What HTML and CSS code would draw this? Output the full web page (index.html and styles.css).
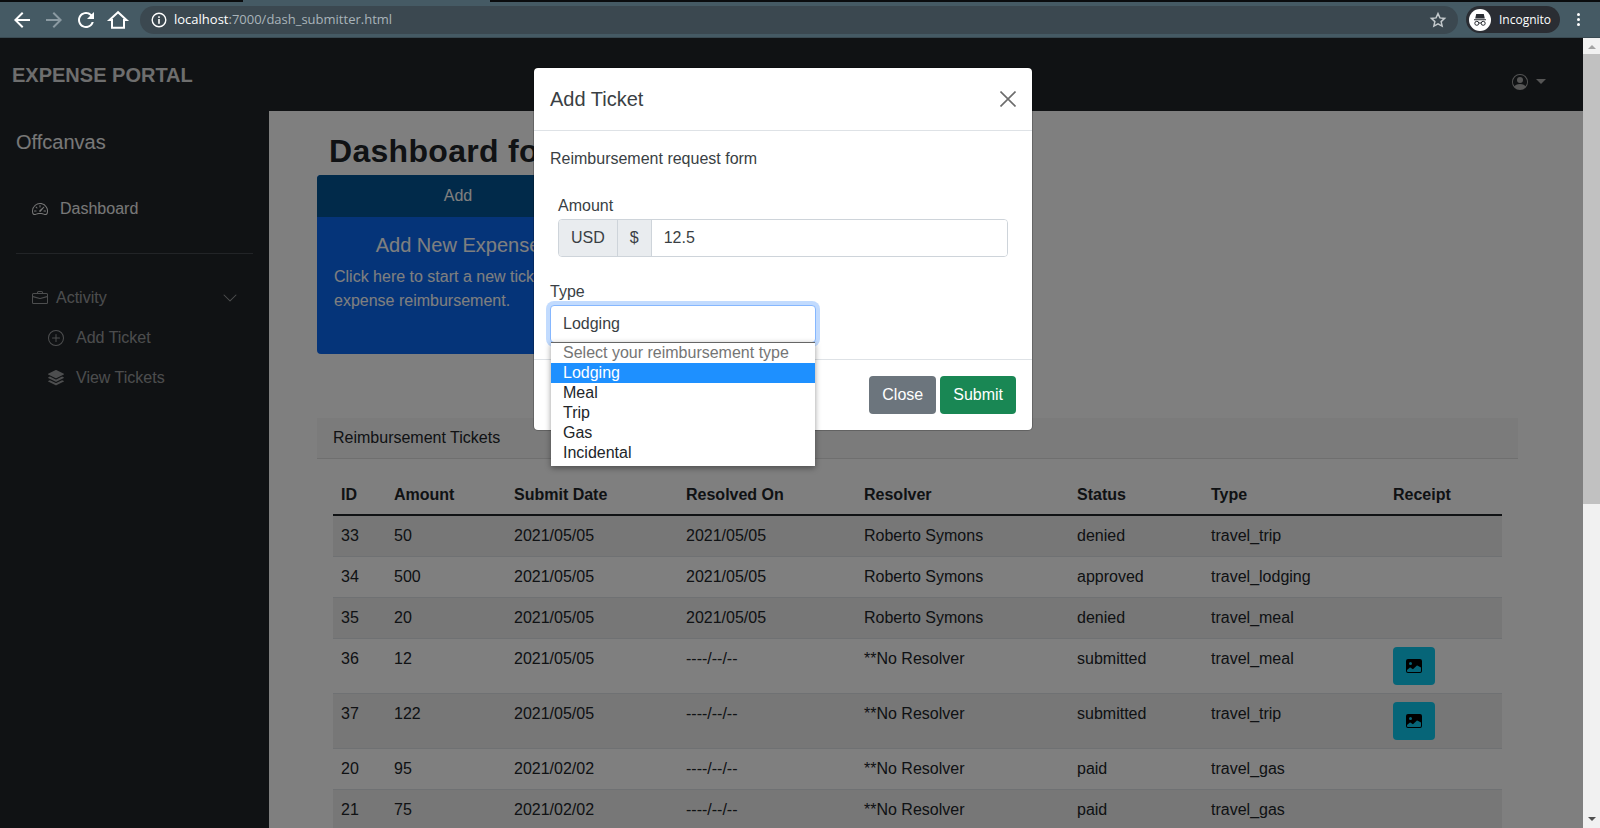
FILE: index.html
```html
<!DOCTYPE html>
<html lang="en">
<head>
    <meta charset="UTF-8">
    <meta name="viewport" content="width=device-width, initial-scale=1.0">
    <title>Expense Portal</title>
    <link rel="stylesheet" href="styles.css">
</head>
<body>

    <!-- browser chrome -->
    <div class="tabstrip"><div class="active-tab"></div></div>
    <div class="toolbar">
        <svg class="tool" viewBox="0 0 24 24"><path d="M20 11H7.83l5.59-5.59L12 4l-8 8 8 8 1.41-1.41L7.83 13H20v-2z"/></svg>
        <svg class="tool tool-off" viewBox="0 0 24 24"><path d="M12 4l-1.41 1.41L16.17 11H4v2h12.17l-5.58 5.59L12 20l8-8z"/></svg>
        <svg class="tool" viewBox="0 0 24 24"><path d="M17.65 6.35A7.958 7.958 0 0 0 12 4c-4.42 0-7.99 3.58-7.99 8s3.57 8 7.99 8c3.73 0 6.84-2.55 7.73-6h-2.08A5.99 5.99 0 0 1 12 18c-3.31 0-6-2.69-6-6s2.69-6 6-6c1.66 0 3.14.69 4.22 1.78L13 11h7V4l-2.35 2.35z"/></svg>
        <svg class="tool" viewBox="0 0 24 24"><path class="home-line" d="M12 4.2 3.5 12H6v7.8h12V12h2.500z"/></svg>
        <div class="address">
            <svg class="info" viewBox="0 0 16 16"><circle class="info-ring" cx="8" cy="8" r="6.8"/><rect x="7.200" y="7" width="1.600" height="4.800"/><rect x="7.200" y="4.300" width="1.600" height="1.600"/></svg>
            <span class="url"><b>localhost</b>:7000/dash_submitter.html</span>
            <svg class="star" viewBox="0 0 24 24"><path d="M12 3.500l2.600 5.700 6.200.7-4.600 4.200 1.300 6.100L12 17.100l-5.500 3.100 1.300-6.100-4.600-4.200 6.200-.7z"/></svg>
        </div>
        <div class="profile">
            <span class="profile-pic">
                <svg viewBox="0 0 22 22">
                    <path d="M5 10.200h12v1H5zM7.200 5h7.600l1 4.400H6.200z"/>
                    <circle class="glass" cx="7.800" cy="14.300" r="2"/>
                    <circle class="glass" cx="14.200" cy="14.300" r="2"/>
                    <path class="glass" d="M9.800 14h2.400"/>
                </svg>
            </span>
            <span>Incognito</span>
        </div>
        <div class="dots"><i></i><i></i><i></i></div>
    </div>

    <div class="viewport">
        <div class="page">
            <header class="navbar">
                <span class="brand">EXPENSE PORTAL</span>
                <span class="user-menu">
                    <svg class="icon" viewBox="0 0 16 16"><path d="M11 6a3 3 0 1 1-6 0 3 3 0 0 1 6 0z"/><path fill-rule="evenodd" d="M0 8a8 8 0 1 1 16 0A8 8 0 0 1 0 8zm8-7a7 7 0 0 0-5.468 11.370C3.242 11.226 4.805 10 8 10s4.757 1.225 5.468 2.370A7 7 0 0 0 8 1z"/></svg>
                    <span class="caret"></span>
                </span>
            </header>

            <div class="layout">
                <aside class="sidebar">
                    <div class="side-title">Offcanvas</div>
                    <a class="side-link side-main">
                        <svg class="icon" viewBox="0 0 16 16"><path d="M8 4a.5.5 0 0 1 .5.5V6a.5.5 0 0 1-1 0V4.500A.5.5 0 0 1 8 4zM3.732 5.732a.5.5 0 0 1 .707 0l.915.914a.5.5 0 1 1-.708.708l-.914-.915a.5.5 0 0 1 0-.707zM2 10a.5.5 0 0 1 .5-.5h1.586a.5.5 0 0 1 0 1H2.500A.5.5 0 0 1 2 10zm9.500 0a.5.5 0 0 1 .5-.5h1.500a.5.5 0 0 1 0 1H12a.5.5 0 0 1-.5-.5zm.754-4.246a.389.389 0 0 0-.527-.02L7.547 9.310a.91.91 0 1 0 1.302 1.258l3.434-4.297a.389.389 0 0 0-.029-.518z"/><path fill-rule="evenodd" d="M0 10a8 8 0 1 1 15.547 2.661c-.442 1.253-1.845 1.602-2.932 1.250C11.309 13.488 9.475 13 8 13c-1.474 0-3.310.488-4.615.911-1.087.352-2.490.003-2.932-1.250A7.988 7.988 0 0 1 0 10zm8-7a7 7 0 0 0-6.603 9.329c.203.575.923.876 1.680.630C4.397 12.533 6.358 12 8 12s3.604.532 4.923.960c.757.245 1.477-.056 1.680-.631A7 7 0 0 0 8 3z"/></svg>
                        Dashboard
                    </a>
                    <hr class="side-rule">
                    <a class="side-link side-group">
                        <svg class="icon" viewBox="0 0 16 16"><path d="M6.500 1A1.500 1.500 0 0 0 5 2.500V3H1.500A1.500 1.500 0 0 0 0 4.500v8A1.500 1.500 0 0 0 1.500 14h13a1.500 1.500 0 0 0 1.500-1.500v-8A1.500 1.500 0 0 0 14.500 3H11v-.5A1.500 1.500 0 0 0 9.500 1h-3zm0 1h3a.5.5 0 0 1 .5.5V3H6v-.5a.5.5 0 0 1 .5-.5zm1.886 6.914L15 7.151V12.500a.5.5 0 0 1-.5.5h-13a.5.5 0 0 1-.5-.5V7.150l6.614 1.764a1.500 1.500 0 0 0 .772 0zM1.500 4h13a.5.5 0 0 1 .5.5v1.616L8.129 7.948a.5.5 0 0 1-.258 0L1 6.116V4.500a.5.5 0 0 1 .5-.5z"/></svg>
                        Activity
                        <svg class="icon chevron" viewBox="0 0 16 16"><path d="M1.646 4.646a.5.5 0 0 1 .708 0L8 10.293l5.646-5.647a.5.5 0 0 1 .708.708l-6 6a.5.5 0 0 1-.708 0l-6-6a.5.5 0 0 1 0-.708z"/></svg>
                    </a>
                    <a class="side-link side-sub">
                        <svg class="icon" viewBox="0 0 16 16"><path d="M8 15A7 7 0 1 1 8 1a7 7 0 0 1 0 14zm0 1A8 8 0 1 0 8 0a8 8 0 0 0 0 16z"/><path d="M8 4a.5.5 0 0 1 .5.5v3h3a.5.5 0 0 1 0 1h-3v3a.5.5 0 0 1-1 0v-3h-3a.5.5 0 0 1 0-1h3v-3A.5.5 0 0 1 8 4z"/></svg>
                        Add Ticket
                    </a>
                    <a class="side-link side-sub">
                        <svg class="icon" viewBox="0 0 16 16"><path d="m14.120 10.163 1.715.858c.22.11.22.424 0 .534L8.267 15.340a.598.598 0 0 1-.534 0L.165 11.555a.299.299 0 0 1 0-.534l1.716-.858 5.317 2.659c.505.252 1.100.252 1.604 0l5.317-2.660z"/><path d="m14.120 6.576 1.715.858c.22.11.22.424 0 .534l-7.568 3.784a.598.598 0 0 1-.534 0L.165 7.968a.299.299 0 0 1 0-.534l1.716-.858 5.317 2.659c.505.252 1.100.252 1.604 0l5.317-2.659z"/><path d="M7.733.063a.598.598 0 0 1 .534 0l7.568 3.784a.3.3 0 0 1 0 .535L8.267 8.165a.598.598 0 0 1-.534 0L.165 4.382a.299.299 0 0 1 0-.535L7.733.063z"/></svg>
                        View Tickets
                    </a>
                </aside>

                <main class="content">
                    <h1 class="title">Dashboard for</h1>

                    <div class="add-card">
                        <div class="add-head">Add</div>
                        <div class="add-body">
                            <h5>Add New Expense</h5>
                            <p>Click here to start a new ticket for expense reimbursement.</p>
                        </div>
                    </div>

                    <section class="tickets">
                        <div class="tickets-head">Reimbursement Tickets</div>
                        <div class="tickets-body">
                            <table class="ticket-table">
                                <colgroup>
                                    <col class="c-id"><col class="c-amount"><col class="c-submit"><col class="c-resolved">
                                    <col class="c-resolver"><col class="c-status"><col class="c-type"><col class="c-receipt">
                                </colgroup>
                                <thead>
                                    <tr><th>ID</th><th>Amount</th><th>Submit Date</th><th>Resolved On</th><th>Resolver</th><th>Status</th><th>Type</th><th>Receipt</th></tr>
                                </thead>
                                <tbody>
                                    <tr><td>33</td><td>50</td><td>2021/05/05</td><td>2021/05/05</td><td>Roberto Symons</td><td>denied</td><td>travel_trip</td><td></td></tr>
                                    <tr><td>34</td><td>500</td><td>2021/05/05</td><td>2021/05/05</td><td>Roberto Symons</td><td>approved</td><td>travel_lodging</td><td></td></tr>
                                    <tr><td>35</td><td>20</td><td>2021/05/05</td><td>2021/05/05</td><td>Roberto Symons</td><td>denied</td><td>travel_meal</td><td></td></tr>
                                    <tr><td>36</td><td>12</td><td>2021/05/05</td><td>----/--/--</td><td>**No Resolver</td><td>submitted</td><td>travel_meal</td><td><button class="receipt-btn"><svg viewBox="0 0 16 16"><path fill-rule="evenodd" d="M.002 3a2 2 0 0 1 2-2h12a2 2 0 0 1 2 2v10a2 2 0 0 1-2 2H2.002a2 2 0 0 1-2-2V3zm1 9v1a1 1 0 0 0 1 1h12a1 1 0 0 0 1-1V9.500l-3.777-1.947a.5.5 0 0 0-.577.093l-3.710 3.710-2.660-1.772a.5.5 0 0 0-.63.062L1.002 12zm5-6.500a1.500 1.500 0 1 0-3 0 1.500 1.500 0 0 0 3 0z"/></svg></button></td></tr>
                                    <tr><td>37</td><td>122</td><td>2021/05/05</td><td>----/--/--</td><td>**No Resolver</td><td>submitted</td><td>travel_trip</td><td><button class="receipt-btn"><svg viewBox="0 0 16 16"><path fill-rule="evenodd" d="M.002 3a2 2 0 0 1 2-2h12a2 2 0 0 1 2 2v10a2 2 0 0 1-2 2H2.002a2 2 0 0 1-2-2V3zm1 9v1a1 1 0 0 0 1 1h12a1 1 0 0 0 1-1V9.500l-3.777-1.947a.5.5 0 0 0-.577.093l-3.710 3.710-2.660-1.772a.5.5 0 0 0-.63.062L1.002 12zm5-6.500a1.500 1.500 0 1 0-3 0 1.500 1.500 0 0 0 3 0z"/></svg></button></td></tr>
                                    <tr><td>20</td><td>95</td><td>2021/02/02</td><td>----/--/--</td><td>**No Resolver</td><td>paid</td><td>travel_gas</td><td></td></tr>
                                    <tr><td>21</td><td>75</td><td>2021/02/02</td><td>----/--/--</td><td>**No Resolver</td><td>paid</td><td>travel_gas</td><td></td></tr>
                                </tbody>
                            </table>
                        </div>
                    </section>
                </main>
            </div>

            <!-- modal over the whole page -->
            <div class="backdrop">
                <div class="modal">
                    <div class="modal-head">
                        <h5>Add Ticket</h5>
                        <svg class="close-x" viewBox="0 0 16 16"><path d="M.5.5l15 15M15.500.5l-15 15"/></svg>
                    </div>
                    <div class="modal-body">
                        <p class="form-note">Reimbursement request form</p>
                        <div class="amount-row">
                            <label for="amount">Amount</label>
                            <div class="input-group">
                                <span class="addon addon-usd">USD</span>
                                <span class="addon addon-sign">$</span>
                                <input id="amount" class="amount-input" type="text" value="12.5">
                            </div>
                        </div>
                        <label for="type">Type</label>
                        <div class="select-wrap">
                            <select id="type" class="type-select">
                                <option>Lodging</option>
                            </select>
                            <ul class="select-list">
                                <li class="placeholder">Select your reimbursement type</li>
                                <li class="selected">Lodging</li>
                                <li>Meal</li>
                                <li>Trip</li>
                                <li>Gas</li>
                                <li>Incidental</li>
                            </ul>
                        </div>
                    </div>
                    <div class="modal-foot">
                        <button class="btn btn-close">Close</button>
                        <button class="btn btn-submit">Submit</button>
                    </div>
                </div>
            </div>
        </div>

        <div class="scrollbar">
            <span class="arrow-up"></span>
            <div class="thumb"></div>
            <span class="arrow-down"></span>
        </div>
    </div>

</body>
</html>
```
FILE: styles.css
```css
* {
    box-sizing: border-box;
}
html, body {
    height: 100%;
}
body {
    margin: 0;
    height: 828px;
    overflow: hidden;
    display: flex;
    flex-direction: column;
    font-family: "Liberation Sans", Arial, sans-serif;
    font-size: 16px;
    line-height: 1.5;
    color: #212529;
    background-color: #fff;
}

/* browser chrome */
.tabstrip {
    height: 2px;
    background-color: #0a0c0e;
    padding-left: 243px;
}
.active-tab {
    width: 247px;
    height: 2px;
    background-color: #455a64;
}
.toolbar {
    height: 36px;
    display: flex;
    align-items: center;
    padding-left: 10px;
    background-color: #455a64;
    border-bottom: 1px solid #3a4a52;
}
.tool {
    width: 24px;
    height: 24px;
    margin-right: 8px;
    fill: #fff;
    flex: none;
}
.tool-off {
    fill: #8b9aa2;
}
.home-line {
    fill: none;
    stroke: #fff;
    stroke-width: 2;
}
.address {
    width: 1318px;
    height: 28px;
    margin-left: 2px;
    display: flex;
    align-items: center;
    padding: 0 11px;
    border-radius: 14px;
    background-color: #3b4850;
}
.info {
    width: 16px;
    height: 16px;
    fill: #fff;
}
.info-ring {
    fill: none;
    stroke: #fff;
    stroke-width: 1.4;
}
.url {
    margin-left: 7px;
    font-family: "Open Sans", sans-serif;
    font-size: 13px;
    color: #a9b4ba;
}
.url b {
    font-weight: 400;
    color: #fff;
}
.star {
    width: 18px;
    height: 18px;
    margin-left: auto;
    fill: none;
    stroke: #c3c9cc;
    stroke-width: 2;
}
.profile {
    width: 94px;
    height: 27px;
    margin-left: 8px;
    display: flex;
    align-items: center;
    gap: 8px;
    padding-left: 3px;
    border-radius: 14px;
    background-color: #2a2d33;
    font-family: "Open Sans", sans-serif;
    font-size: 12px;
    color: #fff;
}
.profile-pic {
    width: 22px;
    height: 22px;
    border-radius: 50%;
    background-color: #fff;
}
.profile-pic svg {
    display: block;
    fill: #2a2d33;
}
.glass {
    fill: none;
    stroke: #2a2d33;
    stroke-width: 1;
}
.dots {
    margin-left: 17px;
    display: flex;
    flex-direction: column;
    gap: 2px;
}
.dots i {
    width: 3px;
    height: 3px;
    border-radius: 50%;
    background-color: #fff;
}

/* page */
.viewport {
    flex: 1;
    display: flex;
    min-height: 0;
}
.page {
    position: relative;
    flex: 1;
    min-width: 0;
    overflow: hidden;
}
.navbar {
    height: 73px;
    display: flex;
    align-items: center;
    justify-content: space-between;
    padding: 0 37px 0 12px;
    background-color: #212529;
}
.brand {
    font-size: 20px;
    font-weight: 700;
    color: #ddd;
}
.user-menu {
    display: flex;
    align-items: center;
    gap: 8px;
    margin-top: 14px;
    color: #aaa;
}
.icon {
    width: 16px;
    height: 16px;
    fill: currentColor;
    flex: none;
}
.caret {
    border-top: 5px solid #aaa;
    border-left: 5px solid transparent;
    border-right: 5px solid transparent;
}
.layout {
    display: flex;
    height: 717px;
}
.sidebar {
    width: 269px;
    flex: none;
    padding: 16px 16px 0;
    background-color: #212529;
}
.side-title {
    font-size: 20px;
    line-height: 30px;
    color: #f0f0f0;
}
.side-link {
    display: flex;
    align-items: center;
    color: rgba(255, 255, 255, 0.55);
}
.side-main {
    margin-top: 40px;
    padding-left: 16px;
    gap: 12px;
    color: #f0f0f0;
}
.side-rule {
    margin: 32px 0 32px;
    border: 0;
    border-top: 1px solid #45494e;
}
.side-group {
    padding: 0 15px 0 16px;
    gap: 8px;
}
.chevron {
    margin-left: auto;
}
.side-sub {
    margin-top: 16px;
    padding-left: 32px;
    gap: 12px;
}
.content {
    flex: 1;
    min-width: 0;
    padding: 0 65px 0 48px;
}
.title {
    margin: 16px 0 0 12px;
    font-size: 32px;
    line-height: 48px;
    font-weight: 700;
    letter-spacing: 0.3px;
    color: #212529;
}
.add-card {
    width: 282px;
    height: 179px;
    border-radius: 4px;
    overflow: hidden;
    background-color: #0b69f2;
    color: #fff;
}
.add-head {
    height: 42px;
    line-height: 41px;
    text-align: center;
    background-color: #035594;
}
.add-body {
    padding: 16px 17px;
}
.add-body h5 {
    margin: 0 0 8px;
    font-size: 20px;
    font-weight: 400;
    line-height: 24px;
    text-align: center;
}
.add-body p {
    margin: 0;
}
.tickets {
    margin-top: 64px;
    width: 1201px;
}
.tickets-head {
    height: 41px;
    padding: 8px 16px;
    background-color: #f7f7f7;
    border-bottom: 1px solid #dfdfdf;
}
.tickets-body {
    padding: 16px;
}
.ticket-table {
    width: 1169px;
    border-collapse: collapse;
    table-layout: fixed;
}
.c-id { width: 53px; }
.c-amount { width: 120px; }
.c-submit { width: 172px; }
.c-resolved { width: 178px; }
.c-resolver { width: 213px; }
.c-status { width: 134px; }
.c-type { width: 182px; }
.c-receipt { width: 117px; }
.ticket-table th, .ticket-table td {
    padding: 8px;
    text-align: left;
    vertical-align: top;
    border-bottom: 1px solid #dee2e6;
}
.ticket-table th {
    padding-bottom: 7px;
    border-bottom: 2px solid #212529;
}
.ticket-table tbody tr:nth-child(odd) {
    background-color: #eeeeee;
}
.receipt-btn {
    display: block;
    width: 42px;
    height: 38px;
    padding: 0;
    border: 0;
    border-radius: 4px;
    background-color: #0dcaf0;
}
.receipt-btn svg {
    display: block;
    width: 16px;
    height: 16px;
    margin: 0 auto;
}

/* modal */
.backdrop {
    position: absolute;
    top: 0;
    left: 0;
    right: 0;
    bottom: 0;
    padding: 29px 17px 0 0;
    background-color: rgba(0, 0, 0, 0.5);
}
.modal {
    width: 500px;
    margin: 0 auto;
    background-color: #fff;
    color: #3a3f44;
    border: 1px solid rgba(0, 0, 0, 0.2);
    border-radius: 5px;
    background-clip: padding-box;
}
.modal-head {
    height: 63px;
    display: flex;
    align-items: center;
    justify-content: space-between;
    padding: 0 16px;
    border-bottom: 1px solid #dee2e6;
}
.modal-head h5 {
    margin: 0;
    font-size: 20px;
    font-weight: 400;
    line-height: 30px;
}
.close-x {
    width: 16px;
    height: 16px;
    fill: none;
    stroke: #6c6c6c;
    stroke-width: 1.6;
}
.modal-body {
    padding: 16px;
}
.modal-body label {
    display: block;
}
.form-note {
    margin: 0 0 16px;
}
.amount-row {
    padding: 7px 8px 23px;
}
.input-group {
    display: flex;
    height: 38px;
    margin-top: 1px;
    border: 1px solid #ced4da;
    border-radius: 4px;
    overflow: hidden;
}
.addon {
    display: flex;
    align-items: center;
    padding: 0 12px;
    background-color: #e9ecef;
    border-right: 1px solid #ced4da;
}
.amount-input {
    flex: 1;
    min-width: 0;
    padding: 0 12px;
    border: 0;
    font: inherit;
    color: inherit;
}
.select-wrap {
    position: relative;
    width: 266px;
    margin-top: 1px;
}
.type-select {
    display: block;
    width: 100%;
    height: 38px;
    padding: 0 12px;
    border: 1px solid #86b7fe;
    border-radius: 4px;
    box-shadow: 0 0 0 4px rgba(13, 110, 253, 0.25);
    background-color: #fff;
    font: inherit;
    color: inherit;
    appearance: none;
}
.select-list {
    position: absolute;
    top: 37px;
    left: 1px;
    width: 264px;
    margin: 0;
    padding: 0 0 3px;
    list-style: none;
    background-color: #fff;
    border-top: 1px solid #666;
    box-shadow: 0 2px 6px rgba(0, 0, 0, 0.4);
    line-height: 20px;
    color: #212529;
}
.select-list li {
    height: 20px;
    padding: 0 12px;
}
.select-list .placeholder {
    color: #757575;
}
.select-list .selected {
    background-color: #1e90ff;
    color: #fff;
}
.modal-foot {
    display: flex;
    justify-content: flex-end;
    gap: 4px;
    padding: 16px;
    border-top: 1px solid #dee2e6;
}
.btn {
    height: 38px;
    padding: 0 13px;
    border: 0;
    border-radius: 4px;
    font: inherit;
    color: #fff;
}
.btn-close {
    background-color: #6c757d;
}
.btn-submit {
    background-color: #198754;
}

/* scrollbar */
.scrollbar {
    width: 17px;
    flex: none;
    display: flex;
    flex-direction: column;
    align-items: center;
    background-color: #f1f1f1;
}
.arrow-up, .arrow-down {
    width: 0;
    height: 0;
    border-left: 4px solid transparent;
    border-right: 4px solid transparent;
}
.arrow-up {
    margin: 7px 0 5px;
    border-bottom: 4px solid #a3a3a3;
}
.arrow-down {
    margin-top: auto;
    margin-bottom: 7px;
    border-top: 4px solid #505050;
}
.thumb {
    width: 100%;
    height: 450px;
    background-color: #c1c1c1;
}
```
